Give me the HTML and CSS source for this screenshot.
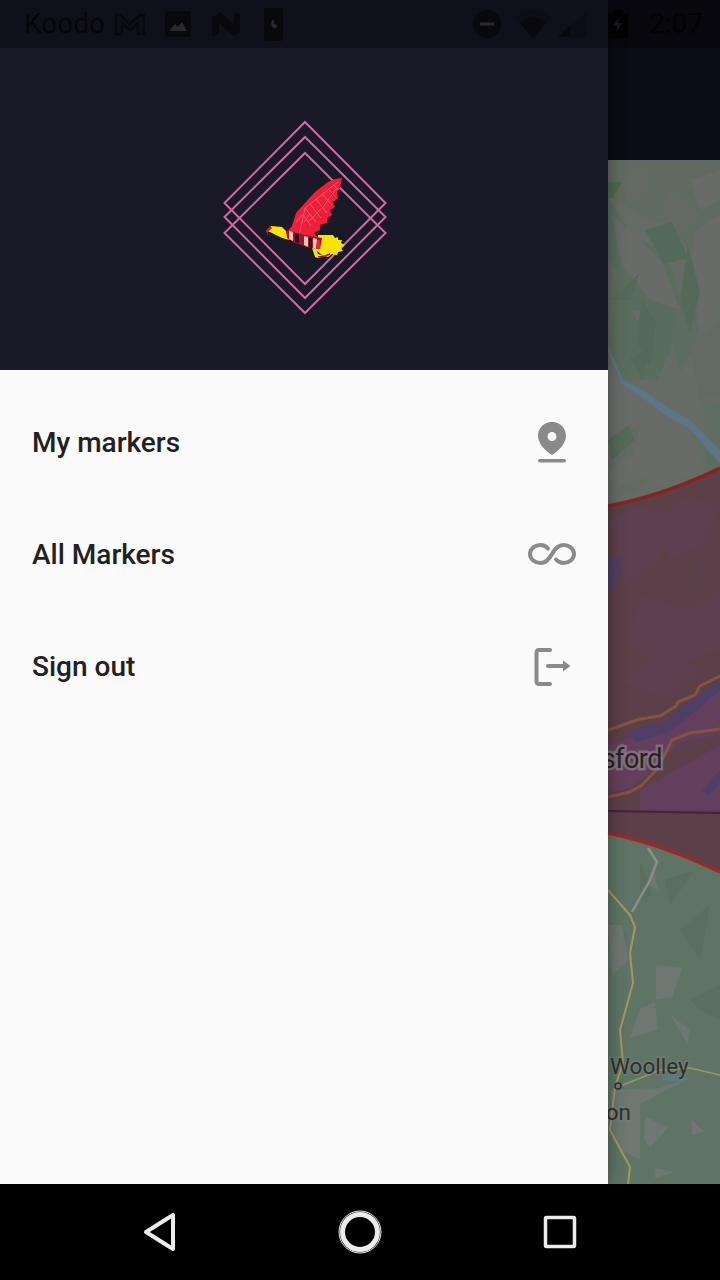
FILE: index.html
```html
<!DOCTYPE html>
<html lang="en">
<head>
<meta charset="utf-8">
<title>My markers</title>
<link rel="stylesheet" href="styles.css">
</head>
<body>
<div class="screen">
  <main class="content">
    <div class="appbar"></div>
    <div class="map">
      <svg class="map-art" viewBox="0 160 720 1024" preserveAspectRatio="none">
        <rect x="600" y="160" width="120" height="1024" fill="#656b65"/>
        <!-- upper relief -->
        <polygon points="608,160 720,160 720,230 690,250 670,225 640,215 608,195" fill="#5f6b60"/>
        <polygon points="608,198 633,237 667,253 680,300 670,350 657,380 623,380 610,347 617,273 608,255" fill="#5a6c5e"/>
        <polygon points="690,260 705,300 695,345 680,372 672,340 682,300" fill="#5c6c60"/>
        <polygon points="700,400 720,405 720,450 708,435" fill="#5f6e63"/>
        <polygon points="705,445 720,455 720,468 706,472" fill="#5a6e5d"/>
        <polygon points="608,182 622,182 612,198 608,198" fill="#4e6752"/>
        <g fill="#696b69">
          <polygon points="612,215 640,240 662,262 680,310 650,300 622,265"/>
          <polygon points="625,385 660,410 690,430 704,470 660,486 640,470 615,495 608,470 608,365"/>
          <polygon points="694,232 720,215 720,300 700,330 690,290"/>
          <polygon points="690,180 720,170 720,200 700,210"/>
          <polygon points="630,310 650,312 645,330"/>
        </g>
        <g fill="#636a64">
          <polygon points="640,165 655,185 628,205 622,180"/>
          <polygon points="670,190 700,215 680,235 660,215"/>
          <polygon points="690,345 720,320 720,395 700,400"/>
          <polygon points="612,440 640,425 634,455 608,470"/>
          <polygon points="620,485 650,478 632,495"/>
        </g>
        <g fill="#55695a">
          <polygon points="645,230 672,222 688,258 664,264"/>
          <polygon points="642,300 656,322 650,368 636,340"/>
          <polygon points="688,245 700,292 690,332 680,300"/>
          <polygon points="612,300 640,272 630,300"/>
          <polygon points="608,440 628,425 635,440 612,460"/>
          <polygon points="630,358 648,350 642,380"/>
        </g>
        <polygon points="608,347 623,380 643,390 667,407 690,420 702,432 720,450 720,464 703,444 690,429 664,414 640,396 622,384 608,352" fill="#5b7689"/>

        <!-- coloured zone -->
        <path d="M608 507Q665 495 720 468V872Q665 845 608 833Z" fill="#5b3f49"/>
        <g fill="#5e3f4f">
          <polygon points="610,520 640,505 670,515 660,560 625,585"/>
          <polygon points="650,520 690,495 720,510 700,545 670,560"/>
          <polygon points="640,595 690,610 720,590 720,650 660,670 630,640"/>
          <polygon points="620,680 665,700 700,670 660,650"/>
        </g>
        <g fill="#623f5c">
          <polygon points="620,742 678,715 720,690 720,735 678,742 655,770 625,790 608,792 608,745"/>
          <polygon points="640,790 720,745 720,810 640,810"/>
        </g>
        <g fill="#4f3f66">
          <polygon points="608,562 622,556 618,578 608,594"/>
          <polygon points="702,572 704,566 694,584 690,590"/>
          <polygon points="702,790 720,770 720,785 707,796"/>
          <polygon points="626,731 665,722 690,700 720,681 720,690 690,716 665,734 636,742"/>
        </g>
        <g fill="none" stroke="#87523f" stroke-width="3" stroke-linejoin="round">
          <polyline points="608,730 620,726 640,719 660,716 676,706 678,702 695,695 700,686 720,676"/>
          <polyline points="608,797 630,792 642,785 658,768 672,740 690,733 720,729"/>
        </g>
        <line x1="608" y1="811" x2="720" y2="813" stroke="#48203a" stroke-width="2"/>
        <path d="M608 506Q665 495 720 468" fill="none" stroke="#8a2220" stroke-width="3.500"/>

        <!-- lower relief -->
        <path d="M608 833Q665 845 720 872V1184H608Z" fill="#5f7465"/>
        <path d="M608 833Q665 845 720 872" fill="none" stroke="#9a2a2a" stroke-width="3.500"/>
        <g fill="#5b6f60">
          <polygon points="665,880 695,870 670,905"/>
          <polygon points="680,930 710,905 700,960"/>
          <polygon points="640,860 652,895 640,900"/>
          <polygon points="690,1000 720,985 720,1020 700,1010"/>
          <polygon points="608,920 628,935 620,960 608,950"/>
        </g>
        <g fill="#6e7772">
          <polygon points="656,965 682,968 672,998 656,1000"/>
          <polygon points="640,1008 655,1002 658,1030 630,1038"/>
          <polygon points="670,1014 690,1030 688,1045"/>
          <polygon points="608,925 622,925 628,960 612,975"/>
          <polygon points="610,1090 660,1088 690,1078 640,1104 640,1160 620,1150 612,1128"/>
          <polygon points="645,1116 668,1128 650,1148 644,1140"/>
          <polygon points="654,1168 675,1172 655,1178"/>
          <polygon points="692,1120 705,1132 692,1135"/>
          <polygon points="648,885 658,890 654,870"/>
        </g>
        <polyline points="648,848 657,862 650,880 632,912" fill="none" stroke="#8b8f8c" stroke-width="2.500"/>
        <polyline points="608,890 630,915 635,927 630,953 633,983 620,1030 623,1063 615,1087 610,1130 630,1167 628,1184" fill="none" stroke="#a2985f" stroke-width="2"/>
        <polyline points="623,1085 660,1070 690,1068 720,1075" fill="none" stroke="#9c9660" stroke-width="1.500"/>
        <polygon points="660,1080 668,1075 692,1078 680,1082" fill="#5b7a84"/>
        <circle cx="618" cy="1086" r="3" fill="#727a75" stroke="#2e322f" stroke-width="1.500"/>
        <text class="map-label map-label-city" x="662" y="768" text-anchor="end">sford</text>
        <text class="map-label" x="610" y="1074">Woolley</text>
        <text class="map-label" x="631" y="1120" text-anchor="end">on</text>
      </svg>
    </div>

    <aside class="drawer">
      <header class="drawer-header">
        <svg class="logo" viewBox="0 0 170 200" width="170" height="200">
          <g fill="none" stroke="#d468a8" stroke-width="2">
            <polygon points="85,4 165.500,85 85,166 4.500,85"/>
            <polygon points="85,19 165.500,99 85,180 4.500,99"/>
            <polygon points="85,35 165.500,115 85,195 4.500,115"/>
          </g>
          <g transform="translate(-220 -118)">
            <polygon points="342,178 340,188 337,192 338,198 333,202 335,207 330,210 332,215 327,218 327,223 320,225 320,230 314,233 318,238 290,236 287,232 292,226 296,213 305,203 315,192 328,182 335,179" fill="#ee2038"/>
            <g fill="none" stroke="#f4608f" stroke-width="0.800">
              <polyline points="338,182 305,208 300,232"/>
              <polyline points="296,222 303,214 311,226"/>
              <polyline points="305,208 316,222"/>
              <polyline points="310,204 321,218"/>
              <polyline points="316,199 327,213"/>
              <polyline points="322,194 332,205"/>
              <polyline points="328,189 336,197"/>
              <polyline points="333,185 339,190"/>
              <polyline points="308,222 316,214 324,206 330,197 337,188"/>
              <polyline points="304,222 310,214"/>
            </g>
            <polygon points="318,235 333,235 335,238 338,237 338,240 342,240 341,243 345,245 341,248 343,251 338,252 337,255 332,254 328,257 322,255 316,250" fill="#f8e400"/>
            <polygon points="312,248 316,248 318,254 322,255 326,256 318,258 315,257" fill="#f8e400"/>
            <polygon points="266,231 271,226 282,227 286,231 290,240 282,238 276,235 270,232" fill="#f8e400"/>
            <polygon points="266,231 270,226 272,228 268,232 268,236" fill="#c0182c"/>
            <polygon points="286,230 300,234 322,238 320,249 310,248 295,243 287,238" fill="#a80f28"/>
            <g fill="#f7c4b8">
              <polygon points="289,231 293,232 293,241 289,239"/>
              <polygon points="304,236 308,237 308,247 304,245"/>
              <polygon points="313,238 317,239 316,249 313,248"/>
            </g>
            <polygon points="295,233 299,234 299,243 295,242" fill="#1c1024"/>
            <polygon points="309,237 312,238 312,248 309,247" fill="#1c1024"/>
            <polygon points="317,240 320,240 320,249 317,249" fill="#ee2038"/>
            <polyline points="318,257 325,256 330,254" fill="none" stroke="#a0142c" stroke-width="1.500"/>
          </g>
        </svg>
      </header>
      <nav class="menu">
        <a class="menu-item">
          <span class="menu-label">My markers</span>
          <svg class="menu-icon" viewBox="0 0 48 48">
            <path fill-rule="evenodd" d="M24 4C15.700 4 10 10.300 10 18C10 25 17 33 24 37C31 33 38 25 38 18C38 10.300 32.300 4 24 4ZM24 14A4.500 4.500 0 1 1 24 23A4.500 4.500 0 1 1 24 14Z"/>
            <rect x="10" y="41" width="28" height="3.500" rx="1.750"/>
          </svg>
        </a>
        <a class="menu-item">
          <span class="menu-label">All Markers</span>
          <svg class="menu-icon" viewBox="0 0 48 48">
            <path class="line" d="M20 18.500C18 16.300 15.500 15 12.500 15C7 15 2 18.800 2 24C2 29.200 7 33 12.500 33C17 33 20.500 30.500 24 24C27.500 17.500 31 15 35.500 15C41 15 46 18.800 46 24C46 29.200 41 33 35.500 33C32.500 33 30 31.700 28 29.500" stroke-width="4"/>
          </svg>
        </a>
        <a class="menu-item">
          <span class="menu-label">Sign out</span>
          <svg class="menu-icon" viewBox="0 0 48 48">
            <path class="line" d="M22 8H11C9 8 8.500 9 8.500 11V39C8.500 41 9 42 11 42H22" stroke-width="4"/>
            <path class="line" d="M20 24H36" stroke-width="4"/>
            <polygon points="35,18.500 42.500,24 35,29.500"/>
          </svg>
        </a>
      </nav>
    </aside>

    <div class="statusbar">
      <div class="status-group">
        <span class="status-text">Koodo</span>
        <svg class="st st-m" viewBox="0 0 32 24"><path class="st-outline" d="M2 22V3H6L16 12L26 3H30V22H24V11L16 18L8 11V22Z"/></svg>
        <svg class="st st-img" viewBox="0 0 26 26"><rect width="26" height="26" rx="3"/><path class="st-cut" d="M4 20L10 13L13 16L17 11L22 20Z"/></svg>
        <svg class="st st-n" viewBox="0 0 28 24"><path d="M0 6L8 0L22 12V1L28 2V20L22 24L7 11V22L0 24Z"/></svg>
        <svg class="st st-phone" viewBox="0 0 19 33"><rect width="19" height="33" rx="3"/><path class="st-cut" d="M10 11A5 5 0 0 0 10 20A4 4 0 0 0 14 18A5 5 0 0 1 10 11Z"/></svg>
      </div>
      <div class="status-group status-right">
        <svg class="st st-dnd" viewBox="0 0 28 28"><circle cx="14" cy="14" r="14"/><rect class="st-cut" x="7" y="12.500" width="14" height="3"/></svg>
        <svg class="st st-wifi" viewBox="0 0 36 28"><path d="M0 8C10 -2 26 -2 36 8L18 28Z" opacity=".35"/><path d="M5 13C13 6 23 6 31 13L18 28Z"/></svg>
        <svg class="st st-signal" viewBox="0 0 29 26"><path d="M29 0V26H0Z" opacity=".35"/><path d="M12 14V26H0Z"/></svg>
        <svg class="st st-batt" viewBox="0 0 20 28"><path d="M5 0H15V3H20V28H0V3H5Z"/><path class="st-bolt" d="M11 7L5 16H9L8 23L14 13H10Z"/></svg>
        <span class="status-text status-time">2:07</span>
      </div>
    </div>
  </main>

  <footer class="navbar">
    <svg class="nav-icon" viewBox="0 0 40 40"><polygon class="nav-stroke" points="6,20 33,3 33,37" stroke-width="4"/></svg>
    <svg class="nav-icon nav-home" viewBox="0 0 48 48"><circle class="nav-stroke" cx="24" cy="24" r="17.500" stroke-width="5"/><circle class="nav-stroke" cx="24" cy="24" r="21" stroke-width="1"/></svg>
    <svg class="nav-icon" viewBox="0 0 40 40"><rect class="nav-stroke" x="5.500" y="5.500" width="29" height="29" rx="1" stroke-width="3.500"/></svg>
  </footer>
</div>
</body>
</html>
```
FILE: styles.css
```css
* { box-sizing: border-box; }
html, body { margin: 0; padding: 0; background: #000; }
body { font-family: Roboto, "Noto Sans", sans-serif; }

.screen {
  width: 720px;
  height: 1280px;
  display: flex;
  flex-direction: column;
  overflow: hidden;
}

.content {
  position: relative;
  flex: 1;
  display: flex;
  flex-direction: column;
  min-height: 0;
}

.appbar { height: 160px; background: #0b0b14; flex: none; }
.map { flex: 1; min-height: 0; }
.map-art { display: block; width: 100%; height: 100%; }
.map-label {
  font-family: Roboto, sans-serif;
  font-size: 22.500px;
  fill: #2c302e;
  stroke: #7a807c;
  stroke-width: 3px;
  stroke-opacity: .55;
  paint-order: stroke;
}
.map-label-city {
  font-size: 27px;
  letter-spacing: -.5px;
  fill: #262226;
  stroke: #8c7c86;
  stroke-width: 5px;
  stroke-opacity: .75;
}

.drawer {
  position: absolute;
  left: 0;
  top: 0;
  bottom: 0;
  width: 608px;
  display: flex;
  flex-direction: column;
  background: #fafafa;
  box-shadow: 0 0 16px rgba(0, 0, 0, .4);
}

.drawer-header {
  flex: none;
  height: 370px;
  background: #191928;
  display: flex;
  justify-content: center;
  align-items: flex-start;
  padding: 118px 0 0 2px;
}
.logo { display: block; overflow: visible; }

.menu { padding-top: 16px; display: flex; flex-direction: column; }
.menu-item {
  height: 112px;
  display: flex;
  align-items: center;
  justify-content: space-between;
  padding: 0 32px;
  color: #212121;
}
.menu-label { font-size: 28px; font-weight: 500; }
.menu-icon { width: 48px; height: 48px; fill: #8a8a8a; }
.menu-icon .line { fill: none; stroke: #8a8a8a; stroke-linecap: round; stroke-linejoin: round; }

.statusbar {
  position: absolute;
  left: 0;
  top: 0;
  width: 720px;
  height: 48px;
  background: rgba(0, 0, 0, .33);
  display: flex;
  align-items: center;
  justify-content: space-between;
  padding: 0 17px 0 24px;
}
.status-group { display: flex; align-items: center; }
.status-text { font-size: 28px; color: #060609; line-height: 48px; }
.st { display: block; flex: none; fill: #08080d; }
.st-outline { fill: none; stroke: #08080d; stroke-width: 2.500; stroke-linejoin: round; }
.st-cut { fill: #2a2a33; }
.st-m { width: 32px; height: 24px; margin-left: 9px; }
.st-img { width: 26px; height: 26px; margin-left: 19px; }
.st-n { width: 28px; height: 24px; margin-left: 21px; }
.st-phone { width: 19px; height: 33px; margin-left: 24px; }
.st-dnd { width: 28px; height: 28px; }
.st-wifi { width: 36px; height: 28px; margin-left: 14px; }
.st-signal { width: 29px; height: 26px; margin-left: 7px; }
.st-batt { width: 20px; height: 28px; margin-left: 21px; fill: #010102; }
.st-bolt { fill: #14141c; }
.status-time { margin-left: 21px; color: #020203; }

.navbar {
  flex: none;
  height: 96px;
  background: #000;
  display: grid;
  grid-template-columns: repeat(3, 200px);
  padding: 0 60px;
  align-items: center;
  justify-items: center;
}
.nav-icon { display: block; width: 40px; height: 40px; overflow: visible; }
.nav-home { width: 48px; height: 48px; }
.nav-stroke { fill: none; stroke: #ececec; stroke-linejoin: round; }
```
